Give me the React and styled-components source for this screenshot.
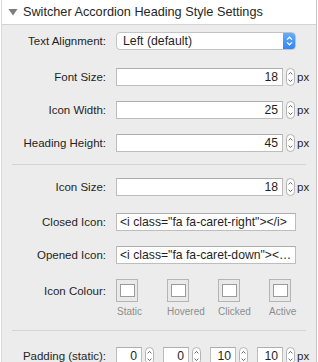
import React from "react";
import styled, { createGlobalStyle } from "styled-components";

const Global = createGlobalStyle`
  html, body { margin: 0; padding: 0; background: #ffffff; }
  body { font-family: "Liberation Sans", Arial, Helvetica, sans-serif; color: #262626; }
  * { box-sizing: border-box; }
`;

const Panel = styled.div`
  width: 316px;
  height: 362px;
  margin-left: 1px;
  border-left: 1px solid #dadada;
  border-right: 1px solid #c6c6c6;
  background: #ececec;
  overflow: hidden;
`;

const Header = styled.div`
  height: 25px;
  background: #ffffff;
  border-bottom: 1px solid #d3d3d3;
  display: flex;
  align-items: center;
  gap: 5px;
  padding-left: 6px;
  font-size: 12.7px;
  color: #262626;
`;

const Section = styled.div`
  display: flex;
  flex-direction: column;
  gap: 15px;
  padding: ${(p) => p.$pt}px 0 ${(p) => p.$pb}px;
`;

const Separator = styled.div`
  height: 1px;
  margin: 0 10px 0 10px;
  background: #d4d4d4;
`;

const Row = styled.div`
  display: grid;
  grid-template-columns: 104px 1fr;
  column-gap: 10px;
  align-items: ${(p) => (p.$top ? "start" : "center")};
  margin-bottom: ${(p) => p.$mb || 0}px;
`;

const Label = styled.div`
  text-align: right;
  font-size: 11.5px;
  line-height: 18px;
  color: #1f1f1f;
  white-space: nowrap;
  padding-top: ${(p) => (p.$top ? 3 : 0)}px;
`;

const Controls = styled.div`
  display: flex;
  align-items: center;
`;

const Select = styled.div`
  width: 180px;
  height: 18px;
  border: 1px solid #c3c3c3;
  border-radius: 4px;
  background: #fff;
  display: flex;
  align-items: center;
  overflow: hidden;
`;

const SelectText = styled.div`
  flex: 1;
  font-size: 12.3px;
  padding-left: 6px;
  color: #1f1f1f;
`;

const SelectButton = styled.div`
  width: 13px;
  height: 18px;
  margin: -1px -1px -1px 0;
  border-radius: 0 4px 4px 0;
  background: linear-gradient(#6aaefb, #2f83f7);
  display: flex;
  align-items: center;
  justify-content: center;
`;

const Input = styled.input`
  width: ${(p) => p.$w || 167}px;
  height: 18px;
  border: 1px solid #bdbdbd;
  border-top-color: #aeaeae;
  background: #fff;
  font-family: "Liberation Sans", Arial, Helvetica, sans-serif;
  font-size: 12.2px;
  color: #1f1f1f;
  padding: 0 ${(p) => (p.$right ? 4 : 3)}px 0 ${(p) => (p.$right ? 2 : 3)}px;
  text-align: ${(p) => (p.$right ? "right" : "left")};
  text-overflow: ellipsis;
  outline: none;
  margin: 0;
  border-radius: 0;
`;

const Unit = styled.span`
  font-size: 11.5px;
  margin-left: 2px;
  color: #1f1f1f;
`;

const NumGroup = styled.div`
  display: flex;
  align-items: center;
  gap: 3px;
`;

const PaddingGroups = styled.div`
  display: flex;
  align-items: center;
  gap: 9px;
`;

const Swatches = styled.div`
  display: flex;
  gap: 24px;
`;

const SwatchCol = styled.div`
  width: 27px;
  display: flex;
  flex-direction: column;
  align-items: flex-start;
  gap: 4px;
`;

const Swatch = styled.div`
  width: 22px;
  height: 23px;
  border: 1px solid #b4b4b4;
  background: #e9e9e9;
  display: flex;
  align-items: center;
  justify-content: center;
`;

const SwatchInner = styled.div`
  width: 15px;
  height: 13px;
  border: 1px solid #9b9b9b;
  background: #fff;
`;

const SwatchLabel = styled.div`
  align-self: stretch;
  text-align: center;
  font-size: 10px;
  color: #8c8c8c;
  white-space: nowrap;
`;

const Stepper = () => (
  <svg width="9" height="18" viewBox="0 0 9 18">
    <rect x="0.5" y="0.5" width="8" height="17" rx="4" fill="#fff" stroke="#b3b3b3" />
    <path d="M2.6 6.4 L4.5 4.4 L6.4 6.4" fill="none" stroke="#555" strokeWidth="0.9" />
    <path d="M2.6 11.6 L4.5 13.6 L6.4 11.6" fill="none" stroke="#555" strokeWidth="0.9" />
  </svg>
);

const NumberField = ({ value, w }) => (
  <NumGroup>
    <Input $right $w={w} readOnly value={value} />
    <Stepper />
  </NumGroup>
);

const NumberRow = ({ label, value, mb }) => (
  <Row $mb={mb}>
    <Label>{label}</Label>
    <Controls>
      <NumberField value={value} />
      <Unit>px</Unit>
    </Controls>
  </Row>
);

const TextRow = ({ label, value }) => (
  <Row>
    <Label>{label}</Label>
    <Controls>
      <Input $w={180} readOnly value={value} />
    </Controls>
  </Row>
);

export default function App() {
  return (
    <>
      <Global />
      <Panel>
        <Header>
          <svg width="10" height="8" viewBox="0 0 10 8">
            <path d="M0.5 1 L9.5 1 L5 7.5 Z" fill="#7d7d7d" />
          </svg>
          <span>Switcher Accordion Heading Style Settings</span>
        </Header>

        <Section $pt={7} $pb={12}>
          <Row $mb={3}>
            <Label>Text Alignment:</Label>
            <Controls>
              <Select>
                <SelectText>Left (default)</SelectText>
                <SelectButton>
                  <svg width="9" height="12" viewBox="0 0 9 12">
                    <path d="M2 4.6 L4.5 2.2 L7 4.6" fill="none" stroke="#fff" strokeWidth="1.3" />
                    <path d="M2 7.4 L4.5 9.8 L7 7.4" fill="none" stroke="#fff" strokeWidth="1.3" />
                  </svg>
                </SelectButton>
              </Select>
            </Controls>
          </Row>
          <NumberRow label="Font Size:" value="18" />
          <NumberRow label="Icon Width:" value="25" />
          <NumberRow label="Heading Height:" value="45" />
        </Section>

        <Separator />

        <Section $pt={13} $pb={13}>
          <NumberRow label="Icon Size:" value="18" mb={2} />
          <TextRow label="Closed Icon:" value={'<i class="fa fa-caret-right"></i>'} />
          <TextRow label="Opened Icon:" value={'<i class="fa fa-caret-down"></i>'} />
          <Row $top>
            <Label $top>Icon Colour:</Label>
            <Swatches>
              {["Static", "Hovered", "Clicked", "Active"].map((s) => (
                <SwatchCol key={s}>
                  <Swatch>
                    <SwatchInner />
                  </Swatch>
                  <SwatchLabel>{s}</SwatchLabel>
                </SwatchCol>
              ))}
            </Swatches>
          </Row>
        </Section>

        <Separator />

        <Section $pt={16} $pb={0}>
          <Row>
            <Label>Padding (static):</Label>
            <Controls>
              <PaddingGroups>
                <NumberField value="0" w={26} />
                <NumberField value="0" w={26} />
                <NumberField value="10" w={26} />
                <NumberField value="10" w={26} />
              </PaddingGroups>
              <Unit>px</Unit>
            </Controls>
          </Row>
        </Section>
      </Panel>
    </>
  );
}
